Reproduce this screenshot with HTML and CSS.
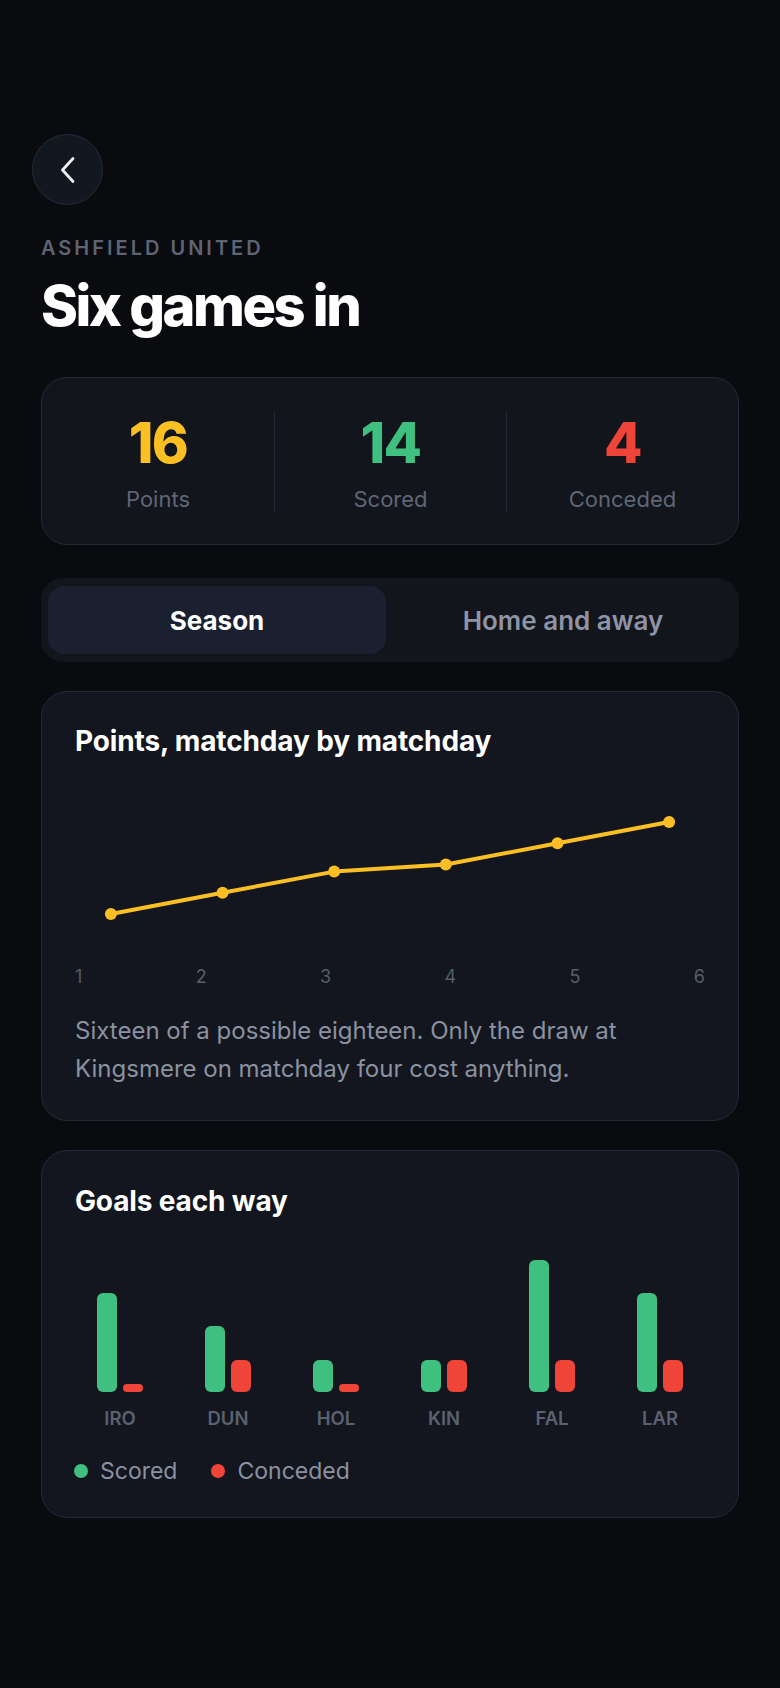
FILE: index.html
```html
<!DOCTYPE html>
<html lang="en">
<head>
<meta charset="utf-8">
<title>Six games in</title>
<link rel="stylesheet" href="styles.css">
</head>
<body>
<main class="page">
  <button class="back" aria-label="Back">
    <svg width="16" height="28" viewBox="0 0 16 28" fill="none"><path d="M13 2.5 L2.5 14 L13 25.5" stroke="#eef0f4" stroke-width="2.8" stroke-linecap="round" stroke-linejoin="round"/></svg>
  </button>
  <div class="eyebrow">ASHFIELD UNITED</div>
  <h1 class="title">Six games in</h1>

  <section class="stats">
    <div class="stat">
      <div class="num yellow">16</div>
      <div class="lbl">Points</div>
    </div>
    <div class="stat">
      <div class="num green">14</div>
      <div class="lbl">Scored</div>
    </div>
    <div class="stat">
      <div class="num red">4</div>
      <div class="lbl">Conceded</div>
    </div>
  </section>

  <nav class="tabs">
    <div class="tab active">Season</div>
    <div class="tab">Home and away</div>
  </nav>

  <section class="card">
    <h2 class="card-title">Points, matchday by matchday</h2>
    <svg class="line-chart" viewBox="0 0 632 180" width="632" height="180">
      <polyline points="36,136.2 148,114.9 260,93.6 372,86.5 484,65.2 596,43.9" fill="none" stroke="#fbbf24" stroke-width="4" stroke-linejoin="round" stroke-linecap="round"/>
      <circle cx="36" cy="136.2" r="6" fill="#fbbf24"/>
      <circle cx="148" cy="114.9" r="6" fill="#fbbf24"/>
      <circle cx="260" cy="93.6" r="6" fill="#fbbf24"/>
      <circle cx="372" cy="86.5" r="6" fill="#fbbf24"/>
      <circle cx="484" cy="65.2" r="6" fill="#fbbf24"/>
      <circle cx="596" cy="43.9" r="6" fill="#fbbf24"/>
    </svg>
    <div class="axis">
      <span>1</span><span>2</span><span>3</span><span>4</span><span>5</span><span>6</span>
    </div>
    <p class="desc">Sixteen of a possible eighteen. Only the draw at Kingsmere on matchday four cost anything.</p>
  </section>

  <section class="card goals">
    <h2 class="card-title">Goals each way</h2>
    <div class="bars">
      <div class="group"><div class="bar for" style="height:99px"></div><div class="bar against" style="height:8px"></div></div>
      <div class="group"><div class="bar for" style="height:66px"></div><div class="bar against" style="height:32px"></div></div>
      <div class="group"><div class="bar for" style="height:32px"></div><div class="bar against" style="height:8px"></div></div>
      <div class="group"><div class="bar for" style="height:32px"></div><div class="bar against" style="height:32px"></div></div>
      <div class="group"><div class="bar for" style="height:132px"></div><div class="bar against" style="height:32px"></div></div>
      <div class="group"><div class="bar for" style="height:99px"></div><div class="bar against" style="height:32px"></div></div>
    </div>
    <div class="bar-labels">
      <span>IRO</span><span>DUN</span><span>HOL</span><span>KIN</span><span>FAL</span><span>LAR</span>
    </div>
    <div class="legend">
      <span class="key"><i class="dot green-bg"></i>Scored</span>
      <span class="key"><i class="dot red-bg"></i>Conceded</span>
    </div>
  </section>
</main>
</body>
</html>
```

FILE: styles.css
```css
* { box-sizing: border-box; }

html, body {
  margin: 0;
  padding: 0;
  background: #0a0b0f;
}

body {
  font-family: Inter, "Noto Sans", "Liberation Sans", sans-serif;
  color: #ffffff;
  min-height: 1688px;
}

.page {
  padding: 134px 41px 120px;
  display: flex;
  flex-direction: column;
}

.back {
  width: 71px;
  height: 71px;
  margin-left: -9px;
  border-radius: 50%;
  background: #131720;
  border: 1px solid #242b38;
  display: flex;
  align-items: center;
  justify-content: center;
  padding: 0;
}

.eyebrow {
  margin-top: 31px;
  font-size: 20px;
  line-height: 24px;
  font-weight: 600;
  letter-spacing: 0.15em;
  color: #5d6474;
}

.title {
  margin: 14px 0 0;
  font-size: 56px;
  line-height: 64px;
  font-weight: 800;
  letter-spacing: -0.045em;
  color: #ffffff;
}

.stats {
  margin-top: 39px;
  display: grid;
  grid-template-columns: repeat(3, 1fr);
  padding: 33px 0 31px;
  background: #12151c;
  border: 1px solid #232a36;
  border-radius: 26px;
}

.stat {
  display: flex;
  flex-direction: column;
  align-items: center;
}

.stat + .stat {
  border-left: 1px solid #232a36;
}

.num {
  font-size: 56px;
  line-height: 64px;
  font-weight: 800;
  letter-spacing: -0.03em;
}

.yellow { color: #fbbf24; }
.green { color: #3fbf80; }
.red { color: #ef4438; }

.lbl {
  margin-top: 10px;
  font-size: 22px;
  line-height: 28px;
  color: #5f6676;
}

.tabs {
  margin-top: 33px;
  display: grid;
  grid-template-columns: 1fr 1fr;
  gap: 8px;
  padding: 8px 7px;
  background: #12151c;
  border-radius: 22px;
}

.tab {
  height: 68px;
  display: flex;
  align-items: center;
  justify-content: center;
  border-radius: 16px;
  font-size: 26px;
  font-weight: 600;
  color: #8e94a6;
}

.tab.active {
  background: #1b2030;
  color: #ffffff;
  font-weight: 700;
}

.card {
  margin-top: 29px;
  padding: 32px 33px;
  background: #13161e;
  border: 1px solid #232a36;
  border-radius: 26px;
}

.card.goals {
  padding-top: 33px;
}

.card-title {
  margin: 0;
  font-size: 28px;
  line-height: 34px;
  font-weight: 700;
  letter-spacing: -0.005em;
  color: #ffffff;
}

.line-chart {
  display: block;
  margin-top: 20px;
  width: 100%;
  height: 180px;
}

.axis {
  margin-top: 8px;
  display: flex;
  justify-content: space-between;
  font-size: 18px;
  line-height: 22px;
  color: #565d6b;
}

.desc {
  margin: 24px 0 0;
  font-size: 24px;
  line-height: 38px;
  color: #8a91a0;
}

.bars {
  margin-top: 42px;
  height: 132px;
  display: grid;
  grid-template-columns: repeat(6, 1fr);
  gap: 18px;
}

.group {
  display: flex;
  align-items: flex-end;
  justify-content: center;
  gap: 6px;
}

.bar {
  width: 20px;
  border-radius: 6px;
}

.bar.for { background: #3fbf80; }
.bar.against { background: #ef4438; }

.bar-labels {
  margin-top: 15px;
  display: grid;
  grid-template-columns: repeat(6, 1fr);
  gap: 18px;
  text-align: center;
  font-size: 18.5px;
  line-height: 22px;
  font-weight: 600;
  color: #5a6170;
}

.legend {
  margin-top: 28px;
  display: flex;
  gap: 34px;
  margin-left: -1px;
  font-size: 23px;
  line-height: 28px;
  color: #8a91a0;
}

.key {
  display: flex;
  align-items: center;
  gap: 12px;
}

.dot {
  width: 14px;
  height: 14px;
  border-radius: 50%;
  display: block;
}

.green-bg { background: #3fbf80; }
.red-bg { background: #ef4438; }
```
